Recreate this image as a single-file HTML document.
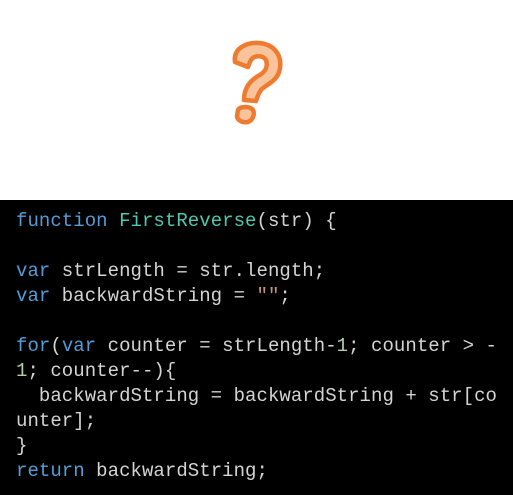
<!DOCTYPE html>
<html><head><style>
html,body{margin:0;padding:0;background:#fff;width:513px;height:495px;overflow:hidden}
.code{position:absolute;left:0;top:200px;width:513px;height:295px;background:#000}
pre{margin:0;position:absolute;left:16px;top:9px;font-family:"Liberation Mono",monospace;font-size:19px;line-height:25px;color:#d4d4d4;letter-spacing:0.05px}
.k{color:#569cd6}.t{color:#4ec9b0}.n{color:#b5cea8}.s{color:#ce9178}
</style></head><body>
<svg style="position:absolute;left:226px;top:38px" width="60" height="90" viewBox="0 0 60 90">
<path d="M9 24 C7 10 21 4 33 5 C47 6 56 16 54 30 C52 44 40 46 35 52 C32 56 31 60 30 63 L18 62 C18 52 22 44 32 38 C40 34 42 28 40 22 C37 17 28 17 25 22 C23 25 23 27 22 29 Z" fill="#f9c39b" stroke="#ee7b30" stroke-width="4.5" stroke-linejoin="round"/>
<path d="M12 72 C14 68 24 68 27 72 C29 76 27 82 22 84 C16 85 11 82 11 78 Z" fill="#f9c39b" stroke="#ee7b30" stroke-width="4.5" stroke-linejoin="round"/>
</svg>
<div class="code"><pre><span class="k">function</span> <span class="t">FirstReverse</span>(str) {

<span class="k">var</span> strLength = str.length;
<span class="k">var</span> backwardString = <span class="s">""</span>;

<span class="k">for</span>(<span class="k">var</span> counter = strLength-<span class="n">1</span>; counter &gt; -
<span class="n">1</span>; counter--){
  backwardString = backwardString + str[co
unter];
}
<span class="k">return</span> backwardString;</pre></div>
</body></html>
